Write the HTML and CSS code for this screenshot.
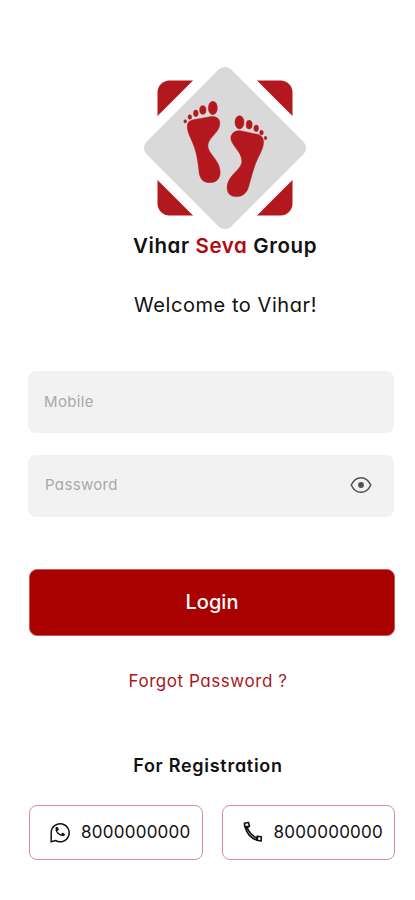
FILE: index.html
```html
<!DOCTYPE html>
<html lang="en">
<head>
<meta charset="utf-8">
<title>Vihar Seva Group</title>
<link rel="stylesheet" href="styles.css">
</head>
<body>
<main class="screen">
  <svg class="logo" viewBox="143 66 164 164" aria-hidden="true">
    <rect x="157.500" y="80.500" width="135" height="135" rx="12" fill="#b3181e"/>
    <path d="M225 48.500 324.500 148 225 247.500 125.500 148Z" fill="#fff"/>
    <rect x="165" y="88" width="120" height="120" rx="9" fill="#d9d9d9" transform="rotate(45 225 148)"/>
    <g transform="translate(175.500 95.300) scale(.3333)" fill="#b3181e" stroke="#b3181e" stroke-width="1.500">
      <path d="M36 88C38 76 50 74 62 72L100 65C120 61 133 68 133 84C133 112 100 125 97 150C96 175 134 195 134 230C134 252 122 262 103 262C82 262 74 250 71 232C66 180 58 155 46 130C38 112 34 100 36 88Z"/>
      <ellipse cx="112" cy="38" rx="13.500" ry="20"/>
      <ellipse cx="82" cy="44" rx="9.500" ry="13"/>
      <ellipse cx="61" cy="54" rx="7" ry="10"/>
      <ellipse cx="43" cy="65" rx="5.500" ry="7"/>
      <ellipse cx="29" cy="78" rx="4" ry="5"/>
      <path d="M166 128C167 112 180 104 198 107L240 116C256 118 265 126 264 142C264 160 250 180 240 205C230 235 226 250 220 272C214 294 202 304 182 304C162 304 154 292 155 274C157 240 196 225 199 200C201 170 166 150 166 128Z"/>
      <ellipse cx="192" cy="81" rx="13.500" ry="20"/>
      <ellipse cx="221" cy="88" rx="9" ry="13"/>
      <ellipse cx="242" cy="99" rx="7" ry="10"/>
      <ellipse cx="258" cy="112" rx="5.500" ry="7"/>
      <ellipse cx="270" cy="128" rx="4" ry="5"/>
    </g>
  </svg>
  <h1 class="brand">Vihar <span class="accent">Seva</span> Group</h1>
  <p class="welcome">Welcome to Vihar!</p>
  <form class="form">
    <div class="field"><span class="hint">Mobile</span></div>
    <div class="field field-password">
      <span class="hint">Password</span>
      <svg class="eye" viewBox="0 0 22 18" fill="none" stroke="#505050" stroke-width="1.500" aria-hidden="true">
        <path d="M1.200 9C3.500 4.200 7 1.700 11 1.700S18.500 4.200 20.800 9C18.500 13.800 15 16.300 11 16.300S3.500 13.800 1.200 9Z"/>
        <circle cx="11" cy="9" r="2.900" fill="#505050" stroke="none"/>
      </svg>
    </div>
    <button class="login" type="button">Login</button>
  </form>
  <a class="forgot">Forgot Password ?</a>
  <h2 class="register">For Registration</h2>
  <div class="contacts">
    <a class="contact">
      <svg class="icon icon-chat" viewBox="0 0 22 22" fill="none" stroke="#111" stroke-width="1.500" aria-hidden="true">
        <path d="M2.200 20.800V11A9 9 0 1 1 6.500 19.500Z" stroke-linejoin="miter"/>
        <path d="M7.400 6.700c-1.200 4 3.200 8.400 7.500 7.600" stroke-width="1.300"/>
        <path d="M7 6.500h1.700l.8 2.200-1.200 1.200zM12.300 13.200l1.100-1.200 2.100 1.100-.3 1.400z" fill="#111" stroke-width=".8"/>
      </svg>
      <span class="number">8000000000</span>
    </a>
    <a class="contact">
      <svg class="icon icon-phone" viewBox="0 0 22 22" fill="none" stroke="#111" stroke-width="1.600" stroke-linejoin="round" aria-hidden="true">
        <path d="M2.400 2.200 6.500 1.500 7.500 5.300 4.400 6.900 2.800 5.800ZM2.800 5.800 7.300 5.300"/>
        <path d="M3.200 6.300C4.800 12.300 9.200 17.300 14.800 19.100M5.200 6.900C6.800 11 10 14.500 14.400 16.800"/>
        <path d="M14.400 16.800 15.400 15.300 19.300 15.700 19.200 20 14.800 19.300ZM15.400 15.500V19.200"/>
      </svg>
      <span class="number">8000000000</span>
    </a>
  </div>
</main>
</body>
</html>
```
FILE: styles.css
```css
* { box-sizing: border-box; }
body {
  margin: 0;
  background: #fff;
  color: #111;
  font-family: Inter, "Open Sans", "Liberation Sans", sans-serif;
  font-feature-settings: "cv11" 1;
}
.screen {
  display: flex;
  flex-direction: column;
  align-items: center;
  width: 415px;
  height: 900px;
  padding: 66px 20px 0 28px;
}
.logo { width: 164px; height: 164px; margin-left: 27px; flex: none; }
.brand {
  margin: 0 0 0 27px;
  font-size: 20.5px;
  font-weight: 600;
  line-height: 32px;
  letter-spacing: 0.6px;
  white-space: nowrap;
}
.accent { color: #b3080c; }
.welcome {
  margin: 27px 0 0 28px;
  font-size: 20px;
  font-weight: 400;
  line-height: 32px;
  letter-spacing: 0.56px;
  white-space: nowrap;
}
.form { align-self: stretch; margin-top: 50px; }
.field {
  display: flex;
  align-items: center;
  justify-content: space-between;
  width: 366px;
  height: 62px;
  padding: 0 22px 2px 16px;
  border-radius: 8px;
  background: #f2f2f2;
}
.field-password { margin-top: 22px; padding-left: 17px; }
.hint { color: #a9a9a9; font-size: 15px; letter-spacing: 0.35px; }
.field-password .hint { margin-bottom: 2px; }
.eye { width: 22px; height: 18px; }
.login {
  display: block;
  width: 366px;
  height: 67px;
  margin: 52px 0 0 1px;
  padding: 0;
  border: 1px solid #c65a5a;
  border-radius: 8px;
  background: #a90000;
  color: #fff;
  font: 500 20px/65px Inter, sans-serif;
  font-feature-settings: inherit;
}
.forgot {
  margin: 31px 7px 0 0;
  color: #a81820;
  font-size: 17px;
  line-height: 28px;
  letter-spacing: 0.56px;
  white-space: nowrap;
}
.register {
  margin: 56px 7px 0 0;
  font-size: 18px;
  font-weight: 600;
  line-height: 30px;
  letter-spacing: 0.72px;
}
.contacts { display: flex; gap: 19px; align-self: stretch; margin: 24px 0 0 1px; }
.contact {
  display: flex;
  align-items: center;
  width: 174px;
  height: 55px;
  padding: 0 0 2px 19px;
  border: 1px solid #d98f99;
  border-radius: 8px;
}
.icon { width: 22px; height: 22px; flex: none; }
.icon-chat { margin-right: 10px; }
.icon-phone { margin-right: 10px; }
.number { font-size: 17px; font-weight: 400; letter-spacing: 0.25px; white-space: nowrap; }
```
